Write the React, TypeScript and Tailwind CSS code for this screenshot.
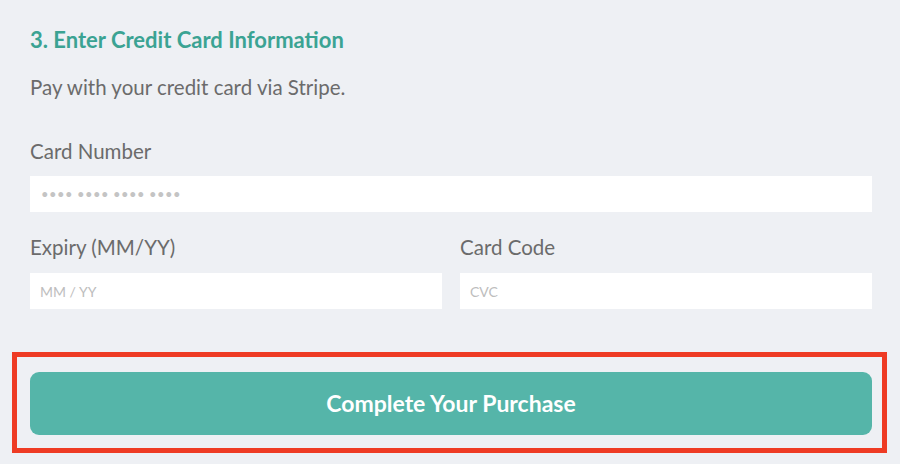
export default function App() {
  return (
    <div className="w-[900px] h-[464px] bg-[#eef0f4] font-['Lato',sans-serif] pt-[27px] pl-[30px] pr-[28px] overflow-hidden">
      <h2 className="text-[22px] leading-[26px] font-bold text-[#3ba393]">
        3. Enter Credit Card Information
      </h2>
      <p className="mt-[21px] text-[20.5px] leading-[26px] text-[#6b6b6b]">
        Pay with your credit card via Stripe.
      </p>

      <label className="block mt-[38px] text-[20.5px] leading-[26px] text-[#6b6b6b]">Card Number</label>
      <input
        className="mt-[12px] block w-full h-[36px] bg-white px-[11px] text-[13px] tracking-[0.5px] outline-none placeholder:text-[#c4c4c4]"
        placeholder="•••• •••• •••• ••••"
      />

      <div className="mt-[22px] grid grid-cols-2 gap-[18px]">
        <div>
          <label className="block text-[20.5px] leading-[26px] text-[#6b6b6b]">Expiry (MM/YY)</label>
          <input
            className="mt-[13px] block w-full h-[36px] bg-white px-[10px] text-[14px] outline-none placeholder:text-[#bdbdbd]"
            placeholder="MM / YY"
          />
        </div>
        <div>
          <label className="block text-[20.5px] leading-[26px] text-[#6b6b6b]">Card Code</label>
          <input
            className="mt-[13px] block w-full h-[36px] bg-white px-[10px] text-[14px] outline-none placeholder:text-[#bdbdbd]"
            placeholder="CVC"
          />
        </div>
      </div>

      <div className="mt-[43px] -ml-[18px] -mr-[15px] border-[5px] border-[#ee3b24] pt-[15px] pb-[13px] pl-[13px] pr-[10px]">
        <button className="w-full h-[63px] rounded-[9px] bg-[#55b5a9] text-white text-[23px] font-bold">
          Complete Your Purchase
        </button>
      </div>
    </div>
  );
}
